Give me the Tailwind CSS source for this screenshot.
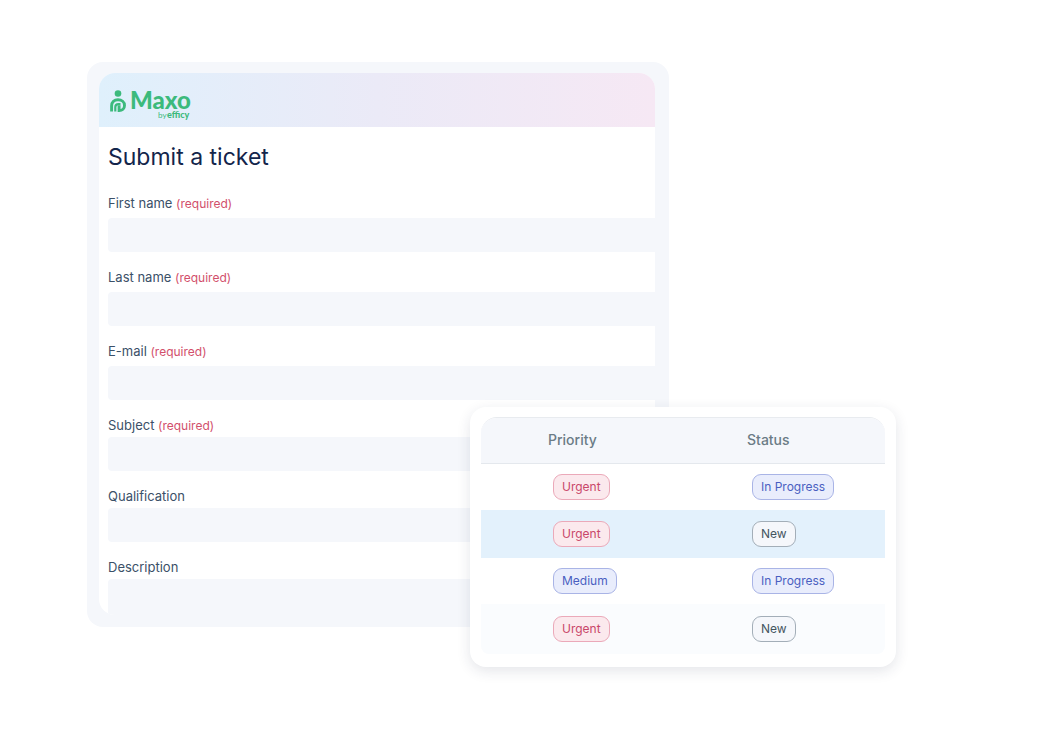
<!DOCTYPE html>
<html lang="en">
<head>
    <meta charset="UTF-8">
    <meta name="viewport" content="width=device-width, initial-scale=1.0">
    <title>Submit a ticket</title>
    <script src="https://cdn.jsdelivr.net/npm/@tailwindcss/browser@4"></script>
</head>
<body class="min-h-screen bg-white pt-[62px] pb-16 font-['Inter',sans-serif]">
    <main class="relative ml-[87px] mr-[154px]">

        <!-- Ticket form -->
        <section class="w-[72%] rounded-2xl bg-[#f5f7fb] pt-[11px] pr-[14px] pb-3 pl-3">
            <div class="overflow-hidden rounded-2xl bg-white">
                <header class="flex h-[54px] items-end bg-linear-to-r from-[#dff0fc] via-[#ebeaf7] to-[#f6e8f4] pb-[7px] pl-[10px]">
                    <svg class="h-8 w-[84px] text-[#3cba7c]" viewBox="0 0 84 32" role="img" aria-label="Maxo by efficy">
                        <circle cx="9" cy="5.500" r="3.300" fill="currentColor"/>
                        <path d="M2.600 23.500V18C2.600 14 5.300 11.800 9 11.800C12.800 11.800 15.500 14 15.500 17.400C15.500 20.600 13.300 22.600 10.100 22.600V17.200" fill="none" stroke="currentColor" stroke-width="2.900"/>
                        <path d="M6.300 23.500V19C6.300 17.200 7.800 16.200 9.600 16.200H11.500" fill="none" stroke="currentColor" stroke-width="2.200"/>
                        <text x="21" y="21" class="font-['Lato',sans-serif] text-[24px] font-black" fill="currentColor">Maxo</text>
                        <text x="49" y="30" class="font-['Lato',sans-serif] text-[8px]" fill="currentColor">by</text>
                        <text x="58" y="30" class="font-['Lato',sans-serif] text-[9px] font-black" fill="currentColor">efficy</text>
                    </svg>
                </header>

                <form class="pl-[9px] text-[13px] text-[#3b5068]">
                    <h1 class="pt-3 text-[23px] leading-9 text-[#13254b]">Submit a ticket</h1>

                    <div class="pt-[18px]">
                        <label for="firstName" class="block pb-[5px] leading-5">First name <span class="text-xs text-[#d2506c]">(required)</span></label>
                        <input type="text" id="firstName" class="block h-[34px] w-full rounded-l bg-[#f5f7fb] px-3">
                    </div>
                    <div class="pt-[15px]">
                        <label for="lastName" class="block pb-[5px] leading-5">Last name <span class="text-xs text-[#d2506c]">(required)</span></label>
                        <input type="text" id="lastName" class="block h-[34px] w-full rounded-l bg-[#f5f7fb] px-3">
                    </div>
                    <div class="pt-[15px]">
                        <label for="email" class="block pb-[5px] leading-5">E-mail <span class="text-xs text-[#d2506c]">(required)</span></label>
                        <input type="email" id="email" class="block h-[34px] w-full rounded-l bg-[#f5f7fb] px-3">
                    </div>
                    <div class="pt-[15px]">
                        <label for="subject" class="block pb-[2px] leading-5">Subject <span class="text-xs text-[#d2506c]">(required)</span></label>
                        <input type="text" id="subject" class="block h-[34px] w-full rounded-l bg-[#f5f7fb] px-3">
                    </div>
                    <div class="pt-[15px]">
                        <label for="qualification" class="block pb-[2px] leading-5">Qualification</label>
                        <input type="text" id="qualification" class="block h-[34px] w-full rounded-l bg-[#f5f7fb] px-3">
                    </div>
                    <div class="pt-[15px]">
                        <label for="description" class="block pb-[2px] leading-5">Description</label>
                        <textarea id="description" class="block h-9 w-full resize-none rounded-tl bg-[#f5f7fb] px-3"></textarea>
                    </div>
                </form>
            </div>
        </section>

        <!-- Ticket list, floats over the form -->
        <section class="absolute top-[345px] right-0 w-[426px] rounded-2xl bg-white px-[11px] pt-[10px] pb-[13px] shadow-[0_4px_14px_rgba(30,40,70,0.12)]">
            <div class="overflow-hidden rounded-t-2xl rounded-b-lg border-t border-[#e8ebef]">
                <table class="w-full table-fixed text-left text-xs">
                    <thead>
                        <tr class="h-[45px] border-b border-[#e4e8ed] bg-[#f5f7fb] text-sm text-[#6b7c86]">
                            <th class="w-[199px] pl-[67px] font-medium">Priority</th>
                            <th class="pl-[67px] font-medium">Status</th>
                        </tr>
                    </thead>
                    <tbody>
                        <tr class="h-[47px]">
                            <td class="pl-[72px]"><span class="inline-block h-[26px] rounded-[9px] border border-[#eba9b9] bg-[#fbe9ed] px-2 leading-6 text-[#c9476a]">Urgent</span></td>
                            <td class="pl-[72px]"><span class="inline-block h-[26px] rounded-[9px] border border-[#a9b4e6] bg-[#e9edfc] px-2 leading-6 text-[#4a5fc1]">In Progress</span></td>
                        </tr>
                        <tr class="h-12 bg-[#e3f1fc]">
                            <td class="pl-[72px]"><span class="inline-block h-[26px] rounded-[9px] border border-[#eba9b9] bg-[#fbe9ed] px-2 leading-6 text-[#c9476a]">Urgent</span></td>
                            <td class="pl-[72px]"><span class="inline-block h-[26px] rounded-[9px] border border-[#a3aeb8] bg-[#f5f7fb] px-2 leading-6 text-[#44555f]">New</span></td>
                        </tr>
                        <tr class="h-[46px]">
                            <td class="pl-[72px]"><span class="inline-block h-[26px] rounded-[9px] border border-[#a9b4e6] bg-[#e9edfc] px-2 leading-6 text-[#4a5fc1]">Medium</span></td>
                            <td class="pl-[72px]"><span class="inline-block h-[26px] rounded-[9px] border border-[#a9b4e6] bg-[#e9edfc] px-2 leading-6 text-[#4a5fc1]">In Progress</span></td>
                        </tr>
                        <tr class="h-[50px] bg-[#fafcfe]">
                            <td class="pl-[72px]"><span class="inline-block h-[26px] rounded-[9px] border border-[#eba9b9] bg-[#fbe9ed] px-2 leading-6 text-[#c9476a]">Urgent</span></td>
                            <td class="pl-[72px]"><span class="inline-block h-[26px] rounded-[9px] border border-[#a3aeb8] bg-[#f5f7fb] px-2 leading-6 text-[#44555f]">New</span></td>
                        </tr>
                    </tbody>
                </table>
            </div>
        </section>

    </main>
</body>
</html>
